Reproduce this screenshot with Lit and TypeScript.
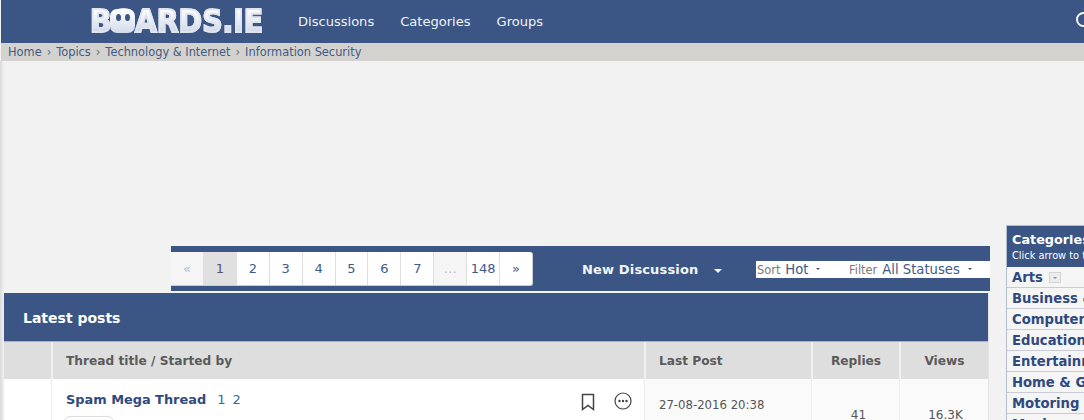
import { LitElement, html, css, svg } from "lit";
import { customElement } from "lit/decorators.js";

@customElement("app-root")
export class AppRoot extends LitElement {
  static styles = css`
    :host { display: block; height: 420px; overflow: hidden; background: #f2f2f2; font-family: "DejaVu Sans", Verdana, sans-serif; color: #555; }
    * { box-sizing: border-box; }
    .top { height: 43px; background: #3b5585; display: flex; align-items: center; margin-left: 1px; position: relative; }
    .logo { position: relative; margin-left: 89px; width: 172px; height: 25px; margin-top: -1px; }
    .logo-t { display: block; font: 700 32px/25px "DejaVu Sans", sans-serif; white-space: nowrap; color: transparent; width: 200px;
      background: linear-gradient(#ffffff, #cdd5e6); -webkit-background-clip: text; background-clip: text; transform: scaleX(0.885); transform-origin: left; -webkit-text-stroke: 1.8px #dfe4ee; }
    .face { position: absolute; left: 20px; top: 0; width: 25px; height: 24px; border-radius: 7px; background: linear-gradient(#ffffff, #d3daea); display: flex; justify-content: center; gap: 4px; padding-top: 5px; }
    .face i { width: 5px; height: 7px; border-radius: 50%; background: #3b5585; }
    .nav { display: flex; gap: 26px; margin-left: 36px; font-size: 13.05px; color: #f1f3f7; margin-top: -1px; }
    .search { position: absolute; left: 1075px; top: 12px; width: 15px; height: 15px; border: 2px solid #f4f5f8; border-radius: 50%; }
    .crumbs { height: 18px; background: #d4d2ce; font-size: 11.4px; line-height: 18px; color: #3f5a87; padding-left: 7px; white-space: nowrap; display: flex; gap: 5px; margin-left: 1px; }
    .sep { color: #5d6f8e; }
    .layout { display: grid; grid-template-columns: 990px 78px; column-gap: 16px; background: linear-gradient(90deg, #d9d9d9, #f2f2f2 4px); }
    .main { padding-top: 185px; min-width: 0; }
    .bar { margin-left: 171px; width: 819px; height: 45px; background: #3b5585; display: flex; align-items: center; }
    .pager { display: flex; height: 34px; width: 362px; background: #fff; border-radius: 0 3px 3px 0; border-bottom: 1px solid #c9ccd2; border-right: 1px solid #c9ccd2; font-size: 13px; color: #3f5a87; margin-top: 1px; }
    .pg { flex: 1; display: flex; align-items: center; justify-content: center; border-right: 1px solid #dedede; }
    .pg:last-child { border-right: 0; }
    .pg.first { background: #f5f5f5; color: #b3bccb; }
    .pg.cur { background: #e0e0e0; color: #556; }
    .pg.gap { background: #f5f5f5; color: #b8b8b8; }
    .new { margin-left: 49px; padding-top: 2px; font-size: 13px; font-weight: 700; color: #f4f5f8; letter-spacing: 0.15px; display: flex; align-items: center; white-space: nowrap; }
    .caret { width: 0; height: 0; border: 4.5px solid transparent; border-top-color: #f4f5f8; border-bottom: 0; margin-left: 16px; margin-top: 2px; }
    .filters { margin-left: auto; width: 234px; height: 17px; background: #fff; display: flex; align-items: center; font-size: 13.2px; color: #3f5a87; white-space: nowrap; margin-top: 1px; padding-left: 1px; }
    .lbl { font-size: 11.4px; color: #777; margin-right: 5px; margin-top: 2px; }
    .tri { width: 0; height: 0; border: 2.5px solid transparent; border-top-color: #444f66; border-bottom: 0; margin-left: 7px; }
    .f1 { display: flex; align-items: center; width: 92px; }
    .f2 { display: flex; align-items: center; }
    .f2 .tri { margin-left: 8px; }
    .panel { margin-left: 4px; margin-top: 2px; width: 985px; background: #fff; border-right: 1px solid #e3e3e3; }
    .ptitle { height: 49px; background: #3b5585; color: #fff; font-size: 14px; font-weight: 700; padding: 1px 0 0 19px; display: flex; align-items: center; border-bottom: 1px solid #a8b2c4; }
    .cols { display: grid; grid-template-columns: 47px 1fr 167px 88px 89px; }
    .head { height: 37px; background: #dedede; font-size: 12.2px; font-weight: 700; color: #5a5a5a; }
    .head > div { display: flex; align-items: center; border-left: 2px solid #f0f0f0; }
    .head > div:first-child { border-left: 0; }
    .h-title { padding-left: 13px; }
    .h-last { padding-left: 13px; }
    .center { justify-content: center; }
    .row { height: 60px; background: #fff; font-size: 12px; color: #555; }
    .row > div { border-left: 1px solid #eee; }
    .row > div:first-child { border-left: 0; }
    .cell-title { position: relative; padding: 13px 0 0 14px; }
    .thread { font-size: 12.9px; font-weight: 700; color: #2f4a80; }
    .pages { font-size: 13px; color: #2f6b9c; margin-left: 11px; word-spacing: 3px; }
    .chip { position: absolute; left: 12px; top: 37px; width: 50px; height: 24px; border: 1px solid #ddd; border-radius: 6px; background: #fff; }
    .ico { position: absolute; top: 14px; }
    .c-last { background: #fafafa; padding: 19px 0 0 14px; white-space: nowrap; font-size: 11.7px; }
    .num { padding-top: 29px; text-align: center; background: #fafafa; }
    .n1 { padding-left: 6px; }
    .n2 { padding-left: 3px; }
    .side { margin-top: 164px; border: 1px solid #b5bccb; border-right: 0; background: #f5f5f5; width: 100px; height: 260px; overflow: hidden; }
    .side-h { background: #3b5585; color: #fff; height: 41px; padding: 5px 0 0 5px; white-space: nowrap; }
    .side-h b { display: block; font-size: 12.8px; line-height: 17px; }
    .side-h span { display: block; font-size: 9.8px; line-height: 15px; }
    .cat { height: 21px; border-bottom: 1px solid #c9ccd2; font-size: 13.2px; font-weight: 700; color: #30497f; padding: 1px 0 0 5px; line-height: 20px; white-space: nowrap; display: flex; align-items: center; }
    .plus { width: 12px; height: 11px; border: 1px solid #d5d5d5; background: #ececec; margin-left: 6px; display: flex; align-items: center; justify-content: center; }
    .plus i { width: 0; height: 0; border: 2.5px solid transparent; border-top-color: #7f8fb0; border-bottom: 0; }
  `;

  render() {
    const pages = ["2", "3", "4", "5", "6", "7"];
    const cats = ["Business & Finance", "Computers & Tech", "Education", "Entertainment", "Home & Garden", "Motoring & Transport", "Music"];
    return html`
      <div class="top">
        <div class="logo"><span class="logo-t">BOARDS.IE</span><div class="face"><i></i><i></i></div></div>
        <div class="nav"><span>Discussions</span><span>Categories</span><span>Groups</span></div>
        <div class="search"></div>
      </div>
      <div class="crumbs"><span>Home</span><span class="sep">›</span><span>Topics</span><span class="sep">›</span><span>Technology &amp; Internet</span><span class="sep">›</span><span>Information Security</span></div>
      <div class="layout">
        <div class="main">
          <div class="bar">
            <div class="pager">
              <div class="pg first">«</div>
              <div class="pg cur">1</div>
              ${pages.map((p) => html`<div class="pg">${p}</div>`)}
              <div class="pg gap">…</div>
              <div class="pg">148</div>
              <div class="pg">»</div>
            </div>
            <div class="new">New Discussion<span class="caret"></span></div>
            <div class="filters">
              <div class="f1"><span class="lbl">Sort</span>Hot<span class="tri"></span></div>
              <div class="f2"><span class="lbl">Filter</span>All Statuses<span class="tri"></span></div>
            </div>
          </div>
          <div class="panel">
            <div class="ptitle">Latest posts</div>
            <div class="cols head">
              <div></div>
              <div class="h-title">Thread title / Started by</div>
              <div class="h-last">Last Post</div>
              <div class="center">Replies</div>
              <div class="center">Views</div>
            </div>
            <div class="cols row">
              <div></div>
              <div class="cell-title">
                <span class="thread">Spam Mega Thread</span><span class="pages">1 2</span>
                <div class="chip"></div>
                <svg class="ico" style="left:529px" width="14" height="18" viewBox="0 0 14 18" fill="none" stroke="#444" stroke-width="1.5">${svg`<path d="M1.500 1.500h11v15L7 12.500l-5.500 4z"/>`}</svg>
                <svg class="ico" style="left:562px;top:13px" width="18" height="18" viewBox="0 0 18 18" fill="none" stroke="#444" stroke-width="1.2">${svg`<circle cx="9" cy="9" r="8"/><circle cx="5.500" cy="9" r="0.6" fill="#444"/><circle cx="9" cy="9" r="0.6" fill="#444"/><circle cx="12.500" cy="9" r="0.6" fill="#444"/>`}</svg>
              </div>
              <div class="c-last">27-08-2016 20:38</div>
              <div class="num n1">41</div>
              <div class="num n2">16.3K</div>
            </div>
          </div>
        </div>
        <div class="side">
          <div class="side-h"><b>Categories</b><span>Click arrow to toggle</span></div>
          <div class="cat">Arts<span class="plus"><i></i></span></div>
          ${cats.map((c) => html`<div class="cat">${c}</div>`)}
        </div>
      </div>
    `;
  }
}
